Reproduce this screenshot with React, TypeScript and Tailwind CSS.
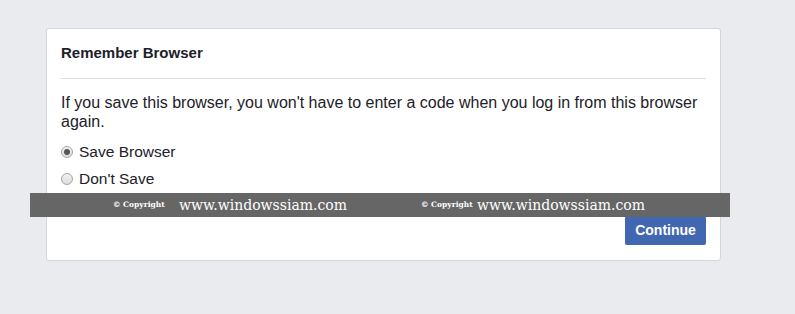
export default function App() {
  return (
    <div className="relative h-[314px] w-[795px] overflow-hidden bg-[#e9ebee] pt-[28px] pl-[46px] font-['Liberation_Sans',Arial,sans-serif] text-[#1d2129]">
      <div className="w-[675px] h-[233px] rounded-[3px] border border-[#d3d6db] bg-white px-[14px]">
        <div className="flex h-[50px] items-end border-b border-[#dddfe2] pb-[16px]">
          <h2 className="text-[15px] font-bold leading-[18px]">Remember Browser</h2>
        </div>
        <p className="mt-[14px] text-[16px] leading-[19px] text-[#1d2129]">
          If you save this browser, you won't have to enter a code when you log in from this browser again.
        </p>
        <div className="mt-[12px] flex flex-col gap-[9px]">
          <label className="flex items-center gap-[6px] text-[15.5px] leading-[18px]">
            <span className="flex h-[12px] w-[12px] items-center justify-center rounded-full border border-[#a6a6a6] bg-gradient-to-b from-[#f2f2f2] to-[#dcdcdc]">
              <span className="h-[6px] w-[6px] rounded-full bg-[#555]" />
            </span>
            Save Browser
          </label>
          <label className="flex items-center gap-[6px] text-[15.5px] leading-[18px]">
            <span className="h-[12px] w-[12px] rounded-full border border-[#a6a6a6] bg-gradient-to-b from-[#f2f2f2] to-[#dcdcdc]" />
            Don't Save
          </label>
        </div>
        <div className="mt-[28px] flex justify-end">
          <button className="h-[29px] w-[81px] rounded-[2px] bg-[#4267b2] text-[14px] font-bold text-white">
            Continue
          </button>
        </div>
      </div>

      <div className="absolute left-[30px] top-[193px] flex h-[24px] w-[700px] items-center bg-[#666666] font-['DejaVu_Serif',serif] text-white">
        <span className="ml-[83px] w-[52px] whitespace-nowrap text-[7.5px] font-bold">© Copyright</span>
        <span className="ml-[14px] w-[167px] whitespace-nowrap text-[14px]">www.windowssiam.com</span>
        <span className="ml-[75px] w-[52px] whitespace-nowrap text-[7.5px] font-bold">© Copyright</span>
        <span className="ml-[4px] w-[167px] whitespace-nowrap text-[14px]">www.windowssiam.com</span>
      </div>
    </div>
  );
}
